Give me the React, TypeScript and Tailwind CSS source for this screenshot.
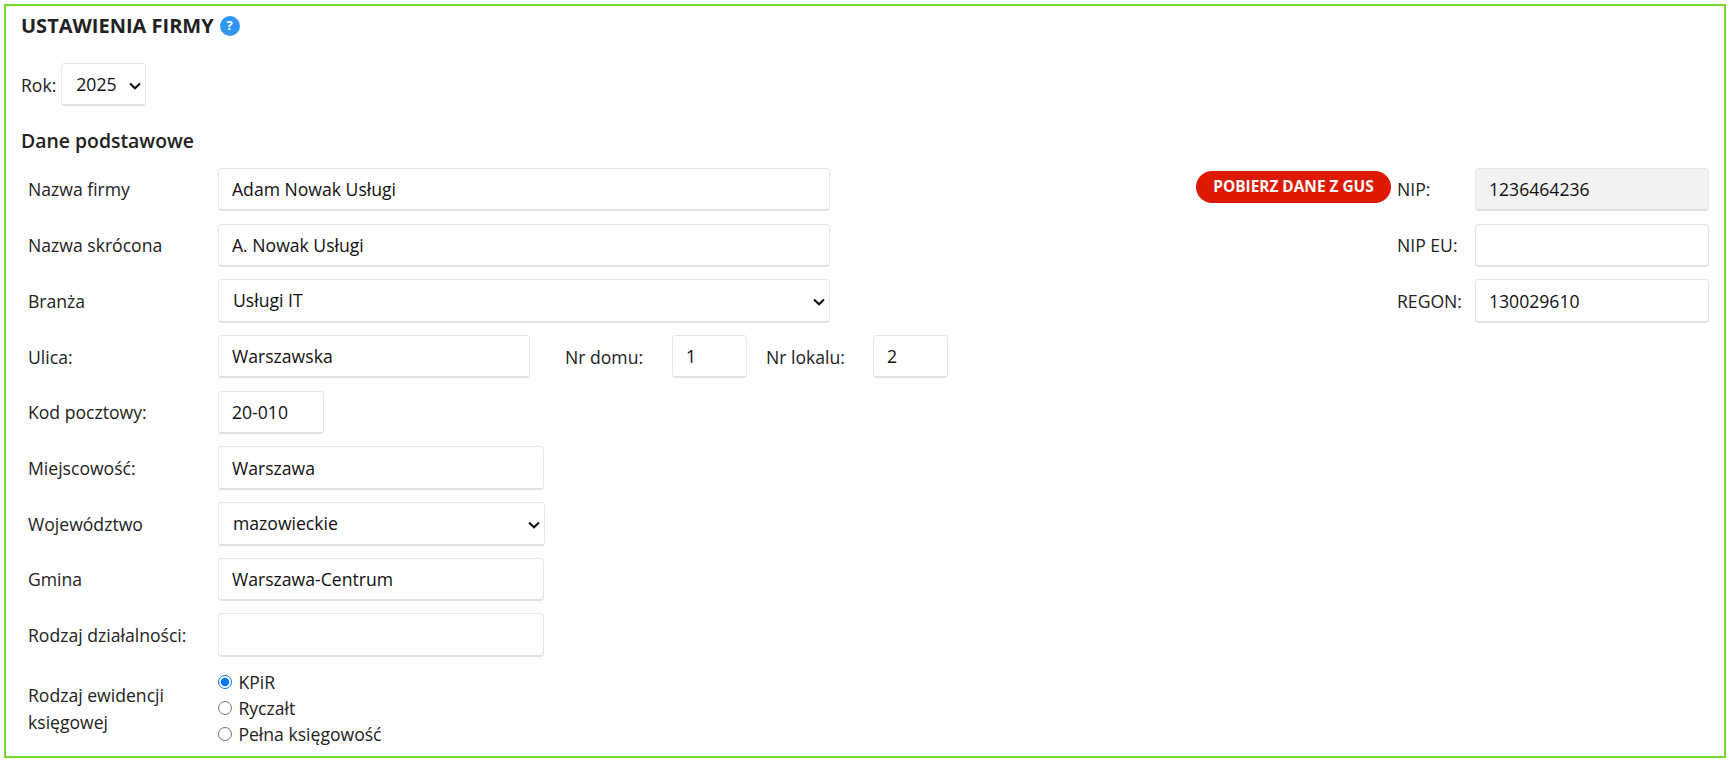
const boxBase = "h-[43.4px] rounded-[4px] border border-[#e6e6e6] border-b-2 border-b-[#e2e2e2] text-[17.6px] text-[#111] outline-none"
const inputBase = `${boxBase} bg-white pl-[13px]`
const labelBase = "text-[17.6px] text-[#222]"

function Field({ label, children }: { label: string; children: React.ReactNode }) {
  return (
    <div className="flex items-center">
      <label className={`${labelBase} ml-[7px] w-[190px]`}>{label}</label>
      {children}
    </div>
  )
}

function SelectBox({ value, options, className }: { value: string; options: string[]; className: string }) {
  return (
    <div className={`relative ${className}`}>
      <select defaultValue={value} className={`${boxBase} w-full appearance-none bg-white pl-[14px]`}>
        {options.map((o) => (
          <option key={o}>{o}</option>
        ))}
      </select>
      <svg viewBox="0 0 12 8" className="pointer-events-none absolute top-[19px] right-[5px] h-[8px] w-[12px]" fill="none" stroke="#111" strokeWidth="2">
        <path d="M1 1.5 6 6.3l5-4.8" />
      </svg>
    </div>
  )
}

export default function App() {
  return (
    <div className="h-[762px] w-[1732px] bg-white pl-[4px] pt-[4px] font-['Open_Sans',sans-serif]">
      <div className="h-[754px] w-[1722px] overflow-hidden border-2 border-[#77d62b] px-[15px]">
        <div className="flex h-[40px] items-center gap-[6px] pb-[1px]">
          <h1 className="text-[20px] font-bold text-[#222]">USTAWIENIA FIRMY</h1>
          <span className="flex h-5 w-5 items-center justify-center rounded-full bg-[#2f96f3] text-[13px] font-bold text-white">?</span>
        </div>
        <div className="mt-[17px] flex items-center gap-[5px]">
          <span className={labelBase}>Rok:</span>
          <SelectBox value="2025" options={["2025"]} className="w-[85px]" />
        </div>
        <h2 className="mt-[21.6px] text-[19.4px] leading-[26px] font-semibold text-[#222]">Dane podstawowe</h2>
        <div className="mt-[14px] flex justify-between">
          <div className="flex flex-col gap-[12.3px]">
            <Field label="Nazwa firmy">
              <input defaultValue="Adam Nowak Usługi" className={`${inputBase} w-[612px]`} />
            </Field>
            <Field label="Nazwa skrócona">
              <input defaultValue="A. Nowak Usługi" className={`${inputBase} w-[612px]`} />
            </Field>
            <Field label="Branża">
              <SelectBox value="Usługi IT" options={["Usługi IT"]} className="w-[612px]" />
            </Field>
            <Field label="Ulica:">
              <input defaultValue="Warszawska" className={`${inputBase} w-[312px]`} />
              <label className={`${labelBase} ml-[35px] w-[107px]`}>Nr domu:</label>
              <input defaultValue="1" className={`${inputBase} w-[75px]`} />
              <label className={`${labelBase} ml-[19px] w-[107px]`}>Nr lokalu:</label>
              <input defaultValue="2" className={`${inputBase} w-[75px]`} />
            </Field>
            <Field label="Kod pocztowy:">
              <input defaultValue="20-010" className={`${inputBase} w-[106px]`} />
            </Field>
            <Field label="Miejscowość:">
              <input defaultValue="Warszawa" className={`${inputBase} w-[326px]`} />
            </Field>
            <Field label="Województwo">
              <SelectBox value="mazowieckie" options={["mazowieckie"]} className="w-[327px]" />
            </Field>
            <Field label="Gmina">
              <input defaultValue="Warszawa-Centrum" className={`${inputBase} w-[326px]`} />
            </Field>
            <Field label="Rodzaj działalności:">
              <input className={`${inputBase} w-[326px]`} />
            </Field>
            <div className="mt-[1px] flex items-center">
              <div className={`${labelBase} ml-[7px] w-[190px] leading-[26.4px]`}>Rodzaj ewidencji<br />księgowej</div>
              <div className="-mt-[1px] flex flex-col text-[17.6px] text-[#222]">
                <label className="flex h-[26px] items-center gap-[6px]"><input type="radio" name="e" defaultChecked className="m-0 h-[14.4px] w-[14.4px] accent-[#0075ff]" />KPiR</label>
                <label className="flex h-[26px] items-center gap-[6px]"><input type="radio" name="e" className="m-0 h-[14.4px] w-[14.4px]" />Ryczałt</label>
                <label className="flex h-[26px] items-center gap-[6px]"><input type="radio" name="e" className="m-0 h-[14.4px] w-[14.4px]" />Pełna księgowość</label>
              </div>
            </div>
          </div>
          <div className="flex flex-col gap-[12.3px]">
            <div className="flex items-start">
              <button className="mt-[3px] mr-[6px] h-[32px] w-[195px] rounded-full bg-[#dd1a00] pb-[1px] text-[15.4px] font-bold text-white">POBIERZ DANE Z GUS</button>
              <label className={`${labelBase} w-[78px] leading-[43px]`}>NIP:</label>
              <input readOnly defaultValue="1236464236" className={`${boxBase} w-[234px] bg-[#f2f2f2] pl-[13px]`} />
            </div>
            <div className="flex items-center justify-end">
              <label className={`${labelBase} w-[78px]`}>NIP EU:</label>
              <input className={`${inputBase} w-[234px]`} />
            </div>
            <div className="flex items-center justify-end">
              <label className={`${labelBase} w-[78px]`}>REGON:</label>
              <input defaultValue="130029610" className={`${inputBase} w-[234px]`} />
            </div>
          </div>
        </div>
      </div>
    </div>
  )
}
